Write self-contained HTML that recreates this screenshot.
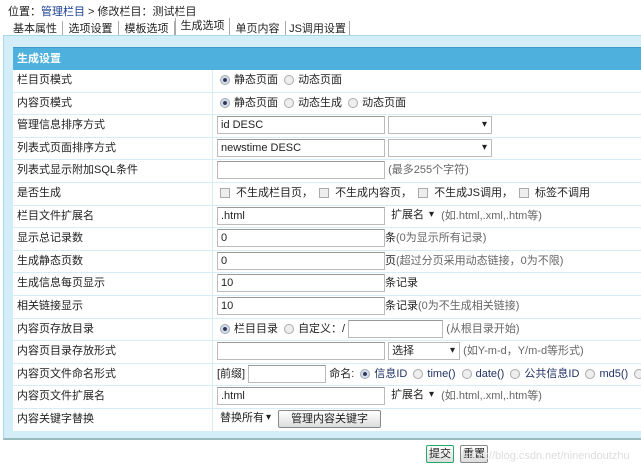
<!DOCTYPE html>
<html><head><meta charset="utf-8"><style>
*{box-sizing:border-box;margin:0;padding:0}
body{width:641px;height:475px;background:#fff;font-family:"Liberation Sans","Noto Sans CJK SC",sans-serif;font-size:11px;color:#222;position:relative;overflow:hidden}
.a{position:absolute}
.tab{position:absolute;top:20px;height:16px;line-height:16px;font-size:11px;text-align:center;border-right:1px solid #aaa}
.panel{position:absolute;left:3px;top:35px;width:645px;height:405px;background:#d4eef9;border:1px solid #a9d8ee;border-bottom:2px solid #9bb;}
.hd{position:absolute;left:13px;top:47px;width:640px;height:23px;background:#4eb0dc;color:#fff;font-weight:bold;line-height:23px;padding-left:4px;border-top:1px solid #3b9cc8}
.row{position:absolute;left:13px;width:640px;background:#fff;border-bottom:1px solid #d6ecf6;line-height:21px}
.row .l{position:absolute;left:4px;top:0}
.row .d{position:absolute;left:199px;top:0;bottom:0;border-left:1px solid #d6ecf6}
.row .v{position:absolute;left:204px;top:0;white-space:nowrap}
.in{display:inline-block;height:18px;border:1px solid #bbb;border-top-color:#999;vertical-align:middle;line-height:16px;padding-left:3px;background:#fff}
.sel{display:inline-block;height:18px;border:1px solid #bbb;vertical-align:middle;line-height:16px;padding-left:3px;position:relative;background:#fff}
.sel:after{content:"▾";position:absolute;right:4px;top:0;font-size:10px}
.rd{display:inline-block;width:10px;height:10px;border-radius:50%;border:1px solid #aaa;background:#eee;vertical-align:middle;margin:0 4px 0 3px}
.rd.on{background:radial-gradient(#335 30%,#cde 40%)}
.cb{display:inline-block;width:10px;height:10px;border:1px solid #aaa;background:#eee;vertical-align:middle;margin:0 6px 0 3px}
.g{color:#666}
.bl{color:#236}
.btn{display:inline-block;height:18px;border:1px solid #888;background:linear-gradient(#fff,#ddd);vertical-align:middle;line-height:16px;padding:0 12px;border-radius:2px}
</style></head><body>
<div class="a" style="left:8px;top:3px">位置：<span style="color:#1a3f8f">管理栏目</span> &gt; 修改栏目：测试栏目</div>
<div class="tab" style="left:8px;width:55px;top:21px">基本属性</div>
<div class="tab" style="left:63px;width:56px;top:21px">选项设置</div>
<div class="tab" style="left:119px;width:56px;top:21px">模板选项</div>
<div class="tab" style="left:175px;width:55px;background:#fff;border-left:1px solid #aaa;top:18px;height:19px">生成选项</div>
<div class="tab" style="left:230px;width:56px;top:21px">单页内容</div>
<div class="tab" style="left:286px;width:64px;top:21px">JS调用设置</div>
<div class="panel"></div>
<div class="hd">生成设置</div>

<div class="row" style="top:70px;height:23px"><span class="l">栏目页模式</span><span class="d"></span><span class="v"><span class="rd on"></span>静态页面 <span class="rd"></span>动态页面</span></div>
<div class="row" style="top:93px;height:22px"><span class="l">内容页模式</span><span class="d"></span><span class="v"><span class="rd on"></span>静态页面 <span class="rd"></span>动态生成 <span class="rd"></span>动态页面</span></div>
<div class="row" style="top:115px;height:23px"><span class="l">管理信息排序方式</span><span class="d"></span><span class="v"><span class="in" style="width:168px">id DESC</span> <span class="sel" style="width:104px"></span></span></div>
<div class="row" style="top:138px;height:22px"><span class="l">列表式页面排序方式</span><span class="d"></span><span class="v"><span class="in" style="width:168px">newstime DESC</span> <span class="sel" style="width:104px"></span></span></div>
<div class="row" style="top:160px;height:23px"><span class="l">列表式显示附加SQL条件</span><span class="d"></span><span class="v"><span class="in" style="width:168px"></span> <span class="g">(最多255个字符)</span></span></div>
<div class="row" style="top:183px;height:23px"><span class="l">是否生成</span><span class="d"></span><span class="v"><span class="cb"></span>不生成栏目页， <span class="cb"></span>不生成内容页， <span class="cb"></span>不生成JS调用， <span class="cb"></span>标签不调用</span></div>
<div class="row" style="top:206px;height:22px"><span class="l">栏目文件扩展名</span><span class="d"></span><span class="v"><span class="in" style="width:168px">.html</span> <span class="sel" style="width:50px;border:none">扩展名</span> <span class="g">(如.html,.xml,.htm等)</span></span></div>
<div class="row" style="top:228px;height:23px"><span class="l">显示总记录数</span><span class="d"></span><span class="v"><span class="in" style="width:168px">0</span>条<span class="g">(0为显示所有记录)</span></span></div>
<div class="row" style="top:251px;height:22px"><span class="l">生成静态页数</span><span class="d"></span><span class="v"><span class="in" style="width:168px">0</span>页<span class="g">(超过分页采用动态链接，0为不限)</span></span></div>
<div class="row" style="top:273px;height:23px"><span class="l">生成信息每页显示</span><span class="d"></span><span class="v"><span class="in" style="width:168px">10</span>条记录</span></div>
<div class="row" style="top:296px;height:23px"><span class="l">相关链接显示</span><span class="d"></span><span class="v"><span class="in" style="width:168px">10</span>条记录<span class="g">(0为不生成相关链接)</span></span></div>
<div class="row" style="top:319px;height:22px"><span class="l">内容页存放目录</span><span class="d"></span><span class="v"><span class="rd on"></span>栏目目录 <span class="rd"></span>自定义：/ <span class="in" style="width:95px"></span> <span class="g">(从根目录开始)</span></span></div>
<div class="row" style="top:341px;height:23px"><span class="l">内容页目录存放形式</span><span class="d"></span><span class="v"><span class="in" style="width:168px"></span> <span class="sel" style="width:72px">选择</span> <span class="g">(如Y-m-d，Y/m-d等形式)</span></span></div>
<div class="row" style="top:364px;height:22px"><span class="l">内容页文件命名形式</span><span class="d"></span><span class="v">[前缀] <span class="in" style="width:78px"></span> 命名: <span class="rd on"></span><span class="bl">信息ID</span> <span class="rd"></span><span class="bl">time()</span> <span class="rd"></span><span class="bl">date()</span> <span class="rd"></span><span class="bl">公共信息ID</span> <span class="rd"></span><span class="bl">md5()</span> <span class="rd"></span><span class="bl">目录</span></span></div>
<div class="row" style="top:386px;height:23px"><span class="l">内容页文件扩展名</span><span class="d"></span><span class="v"><span class="in" style="width:168px">.html</span> <span class="sel" style="width:50px;border:none">扩展名</span> <span class="g">(如.html,.xml,.htm等)</span></span></div>
<div class="row" style="top:409px;height:23px"><span class="l">内容关键字替换</span><span class="d"></span><span class="v"><span class="sel" style="width:58px;border:none">替换所有</span> <span class="btn">管理内容关键字</span></span></div>

<div class="a" style="left:426px;top:445px"><span class="btn" style="padding:0 2px;border-color:#2a6">提交</span> &nbsp;<span class="btn" style="padding:0 2px">重置</span></div>
<div class="a" style="left:462px;top:450px;color:#ddd;font-size:11px">https://blog.csdn.net/ninendoutzhu</div>
</body></html>
